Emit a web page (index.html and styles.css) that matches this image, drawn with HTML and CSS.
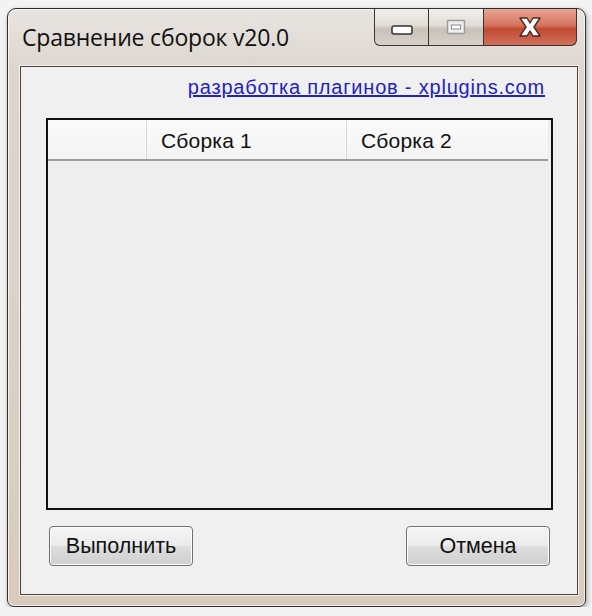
FILE: index.html
```html
<!DOCTYPE html>
<html lang="ru">
<head>
    <meta charset="UTF-8">
    <title>Сравнение сборок v20.0</title>
    <link rel="stylesheet" href="styles.css">
</head>
<body>

    <div class="window">
        <!-- title bar -->
        <div class="titlebar">
            <div class="title">Сравнение сборок v20.0</div>
            <div class="caption-buttons">
                <div class="cap-btn cap-min">
                    <svg width="22" height="12" viewBox="0 0 22 12">
                        <rect x="1" y="2" width="20" height="8" rx="2" fill="#fff" stroke="#333" stroke-width="1.5"/>
                    </svg>
                </div>
                <div class="cap-btn cap-max">
                    <svg width="20" height="16" viewBox="0 0 20 16">
                        <rect x="1.5" y="1.5" width="17" height="13" rx="1" fill="#eee" stroke="#9a9a9a" stroke-width="1.5"/>
                        <rect x="5.5" y="6" width="9" height="4" fill="#fff" stroke="#9a9a9a" stroke-width="1.2"/>
                    </svg>
                </div>
                <div class="cap-btn cap-close">
                    <svg width="30" height="24" viewBox="0 0 30 24">
                        <path d="M5 3 L12 3 L15 8 L18 3 L25 3 L19 12 L25 21 L18 21 L15 16 L12 21 L5 21 L11 12 Z" fill="#fff" stroke="#4a2a22" stroke-width="1.4" stroke-linejoin="round"/>
                    </svg>
                </div>
            </div>
        </div>

        <!-- client area -->
        <div class="client">
            <div class="link-row">
                <a href="#" class="site-link">разработка плагинов - xplugins.com</a>
            </div>

            <div class="listview">
                <div class="lv-header">
                    <div class="lv-col lv-col-first"></div>
                    <div class="lv-col lv-col-wide">Сборка 1</div>
                    <div class="lv-col lv-col-wide">Сборка 2</div>
                </div>
                <div class="lv-body"></div>
            </div>

            <div class="button-row">
                <button class="win-btn">Выполнить</button>
                <button class="win-btn">Отмена</button>
            </div>
        </div>
    </div>

</body>
</html>
```

FILE: styles.css
```css
body {
    margin: 0;
    background-color: #f3f3f3;
    font-family: "Liberation Sans", Arial, sans-serif;
}
.window {
    box-sizing: border-box;
    width: 579px;
    height: 599px;
    margin: 8px 0 0 7px;
    border: 1px solid #2e2e2e;
    border-radius: 9px 9px 7px 7px;
    background: linear-gradient(to bottom, #e8e4e0 0px, #ddd6cf 60px, #d8cbbd 100%);
    box-shadow: 1px 2px 5px rgba(0, 0, 0, 0.35), inset 0 0 0 1px rgba(255, 255, 255, 0.7);
    padding: 0 7px 0 12px;
}
.titlebar {
    display: flex;
    justify-content: space-between;
    height: 57px;
}
.title {
    font-family: "Open Sans", "Noto Sans", sans-serif;
    font-size: 23px;
    color: #111;
    padding: 12px 0 0 2px;
    letter-spacing: -0.2px;
}
.caption-buttons {
    display: flex;
    height: 37px;
    margin-right: 1px;
}
.cap-btn {
    display: flex;
    align-items: center;
    justify-content: center;
    box-sizing: border-box;
    height: 37px;
    border: 1px solid #3a3530;
    border-top: none;
}
.cap-min {
    width: 55px;
    border-radius: 0 0 0 6px;
    background: linear-gradient(to bottom, #f1eeeb 0%, #e3ddd7 45%, #c9c0b7 55%, #d8d0c8 100%);
    padding-top: 6px;
}
.cap-max {
    width: 55px;
    border-left: none;
    background: linear-gradient(to bottom, #f1eeeb 0%, #e3ddd7 45%, #c9c0b7 55%, #d8d0c8 100%);
}
.cap-close {
    width: 93px;
    border-left: none;
    border-radius: 0 0 6px 0;
    background: linear-gradient(to bottom, #e8a493 0%, #d47560 45%, #c24a33 55%, #d0705a 100%);
}
.client {
    box-sizing: border-box;
    height: 529px;
    border: 1px solid #4a4440;
    background-color: #f0f0f0;
    box-shadow: 0 0 0 1px #f4efe9;
    padding: 0 0 28px 0;
    display: flex;
    flex-direction: column;
}
.link-row {
    display: flex;
    justify-content: flex-end;
    padding: 9px 32px 0 0;
    height: 41px;
    box-sizing: border-box;
}
.site-link {
    color: #2222c4;
    font-size: 20px;
    text-decoration: underline;
    letter-spacing: 0.8px;
}
.listview {
    box-sizing: border-box;
    height: 392px;
    margin: 10px 24px 0 25px;
    border: 2px solid #111;
    background-color: #eeeeee;
}
.lv-header {
    display: flex;
    height: 39px;
    width: 500px;
    border-bottom: 2px solid #9c9c9c;
    background: linear-gradient(to bottom, #fafafa 0%, #f4f4f4 100%);
}
.lv-col {
    box-sizing: border-box;
    font-size: 21px;
    letter-spacing: 0.2px;
    color: #111;
    padding: 9px 0 0 14px;
    border-right: 1px solid #d4d4d4;
    box-shadow: inset -1px 0 0 #ffffff;
}
.lv-col-first {
    width: 99px;
}
.lv-col-wide {
    width: 200px;
}
.lv-col-wide:last-child {
    width: 201px;
    border-right: none;
    box-shadow: none;
}
.button-row {
    display: flex;
    justify-content: space-between;
    margin-top: auto;
    padding: 0 27px 0 28px;
}
.win-btn {
    width: 144px;
    height: 40px;
    border: 1px solid #707070;
    border-radius: 4px;
    background: linear-gradient(to bottom, #f4f4f4 0%, #ebebeb 48%, #dddddd 52%, #cfcfcf 100%);
    box-shadow: inset 0 0 0 1px #fcfcfc;
    font-family: "Liberation Sans", Arial, sans-serif;
    font-size: 21.5px;
    color: #111;
    padding: 0;
}
```
